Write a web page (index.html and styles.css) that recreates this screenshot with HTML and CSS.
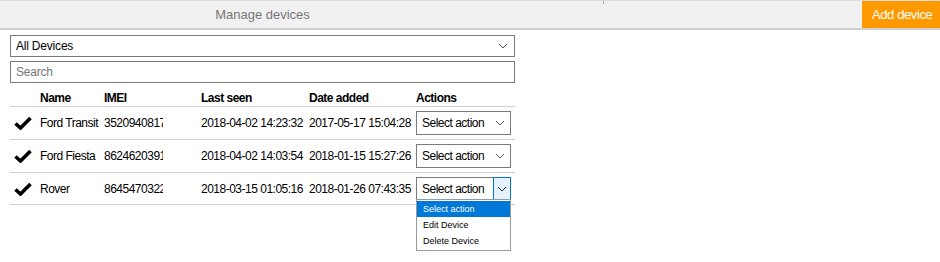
FILE: index.html
```html
<!DOCTYPE html>
<html>
<head>
<meta charset="UTF-8">
<title>Manage devices</title>
<link rel="stylesheet" href="styles.css">
</head>
<body>
<div class="topBar">
  <div class="topTitle">Manage devices</div>
  <div class="topSpacer"><span class="tick"></span></div>
  <div class="addDevice">Add device</div>
</div>
<div class="devicePanel">
  <div class="selectBox filterBox">
    <span class="selectText">All Devices</span>
    <svg class="chevron" width="10" height="6" viewBox="0 0 10 6"><polyline points="1,1 5,5 9,1" fill="none" stroke="#555" stroke-width="1"/></svg>
  </div>
  <input class="searchBox" type="text" placeholder="Search">

  <div class="deviceTable">
    <div class="row headRow">
      <div class="cell"></div>
      <div class="cell">Name</div>
      <div class="cell">IMEI</div>
      <div class="cell">Last seen</div>
      <div class="cell">Date added</div>
      <div class="cell">Actions</div>
    </div>

    <div class="row">
      <div class="cell"><svg class="check" width="18" height="14" viewBox="0 0 18 14"><polyline points="1.5,7.5 6.5,12 16.5,2" fill="none" stroke="#000" stroke-width="3.6"/></svg></div>
      <div class="cell">Ford Transit</div>
      <div class="cell"><span class="imei">352094081748213</span></div>
      <div class="cell">2018-04-02 14:23:32</div>
      <div class="cell">2017-05-17 15:04:28</div>
      <div class="cell">
        <div class="selectBox actionBox">
          <span class="selectText">Select action</span>
          <svg class="chevron" width="10" height="6" viewBox="0 0 10 6"><polyline points="1,1 5,5 9,1" fill="none" stroke="#555" stroke-width="1"/></svg>
        </div>
      </div>
    </div>

    <div class="row">
      <div class="cell"><svg class="check" width="18" height="14" viewBox="0 0 18 14"><polyline points="1.5,7.5 6.5,12 16.5,2" fill="none" stroke="#000" stroke-width="3.6"/></svg></div>
      <div class="cell">Ford Fiesta</div>
      <div class="cell"><span class="imei">862462039157740</span></div>
      <div class="cell">2018-04-02 14:03:54</div>
      <div class="cell">2018-01-15 15:27:26</div>
      <div class="cell">
        <div class="selectBox actionBox">
          <span class="selectText">Select action</span>
          <svg class="chevron" width="10" height="6" viewBox="0 0 10 6"><polyline points="1,1 5,5 9,1" fill="none" stroke="#555" stroke-width="1"/></svg>
        </div>
      </div>
    </div>

    <div class="row lastRow">
      <div class="cell"><svg class="check" width="18" height="14" viewBox="0 0 18 14"><polyline points="1.5,7.5 6.5,12 16.5,2" fill="none" stroke="#000" stroke-width="3.6"/></svg></div>
      <div class="cell">Rover</div>
      <div class="cell"><span class="imei">864547032258519</span></div>
      <div class="cell">2018-03-15 01:05:16</div>
      <div class="cell">2018-01-26 07:43:35</div>
      <div class="cell">
        <div class="selectBox actionBox openBox">
          <span class="selectText">Select action</span>
          <span class="chevronBtn"><svg class="chevron" width="10" height="6" viewBox="0 0 10 6"><polyline points="1,1 5,5 9,1" fill="none" stroke="#333" stroke-width="1"/></svg></span>
          <ul class="optionList">
            <li class="optionActive">Select action</li>
            <li>Edit Device</li>
            <li>Delete Device</li>
          </ul>
        </div>
      </div>
    </div>
  </div>
</div>
</body>
</html>
```
FILE: styles.css
```css
html, body{
  min-height: 100vh;
}
body{
  margin: 0;
  font-family: "Liberation Sans", Arial, sans-serif;
  font-size: 12px;
  color: #000;
  background: #fff;
}
.topBar{
  display: flex;
  height: 27px;
  border-top: 1px solid #dcdcdc;
  border-bottom: 2px solid #d0d0d0;
  background-color: #f1f1f1;
}
.topTitle{
  width: 525px;
  text-align: center;
  font-size: 13px;
  line-height: 27px;
  color: #777;
}
.topSpacer{
  flex: 1;
}
.tick{
  display: block;
  width: 1px;
  height: 3px;
  margin-left: 78px;
  background-color: #aaa;
}
.addDevice{
  width: 78px;
  padding-left: 10px;
  box-sizing: border-box;
  background-color: #ff9900;
  color: #fff;
  font-size: 13px;
  letter-spacing: -0.4px;
  line-height: 27px;
  white-space: nowrap;
}
.devicePanel{
  width: 505px;
  padding: 5px 0 60px 10px;
}
.selectBox{
  display: flex;
  align-items: center;
  justify-content: space-between;
  border: 1px solid #7a7a7a;
  background: #fff;
  box-sizing: border-box;
}
.filterBox{
  height: 22px;
  padding: 0 6px 0 5px;
  letter-spacing: -0.2px;
}
.searchBox{
  display: block;
  width: 505px;
  height: 22px;
  margin-top: 4px;
  padding: 0 5px;
  box-sizing: border-box;
  border: 1px solid #7a7a7a;
  font-family: inherit;
  font-size: 12px;
  letter-spacing: -0.2px;
  outline: none;
}
.searchBox::placeholder{
  color: #767676;
}
.deviceTable{
  margin-top: 6px;
  letter-spacing: -0.5px;
}
.row{
  display: grid;
  grid-template-columns: 30px 64px 97px 108px 107px 99px;
  align-items: center;
  height: 32px;
  border-bottom: 1px solid #d0d0d0;
  white-space: nowrap;
}
.headRow{
  height: 17px;
  font-weight: bold;
}
.lastRow{
  height: 31px;
}
.check{
  display: block;
  margin-left: 4px;
}
.imei{
  display: block;
  width: 59px;
  overflow: hidden;
}
.actionBox{
  position: relative;
  width: 95px;
  height: 24px;
  padding: 0 5px 0 5px;
}
.openBox{
  padding-right: 0;
}
.chevronBtn{
  display: flex;
  align-items: center;
  justify-content: center;
  width: 18px;
  height: 24px;
  margin: -1px -1px -1px 0;
  border: 1px solid #0078d7;
  box-sizing: border-box;
  background-color: #e5f1fb;
}
.optionList{
  position: absolute;
  left: -1px;
  top: 21px;
  width: 95px;
  margin: 0;
  padding: 1px 0;
  list-style: none;
  border: 1px solid #9a9a9a;
  background: #fff;
  box-sizing: border-box;
  font-size: 9px;
  letter-spacing: 0;
  z-index: 2;
}
.optionList li{
  height: 16px;
  line-height: 16px;
  padding-left: 6px;
}
.optionActive{
  background-color: #0078d7;
  color: #fff;
}
```
